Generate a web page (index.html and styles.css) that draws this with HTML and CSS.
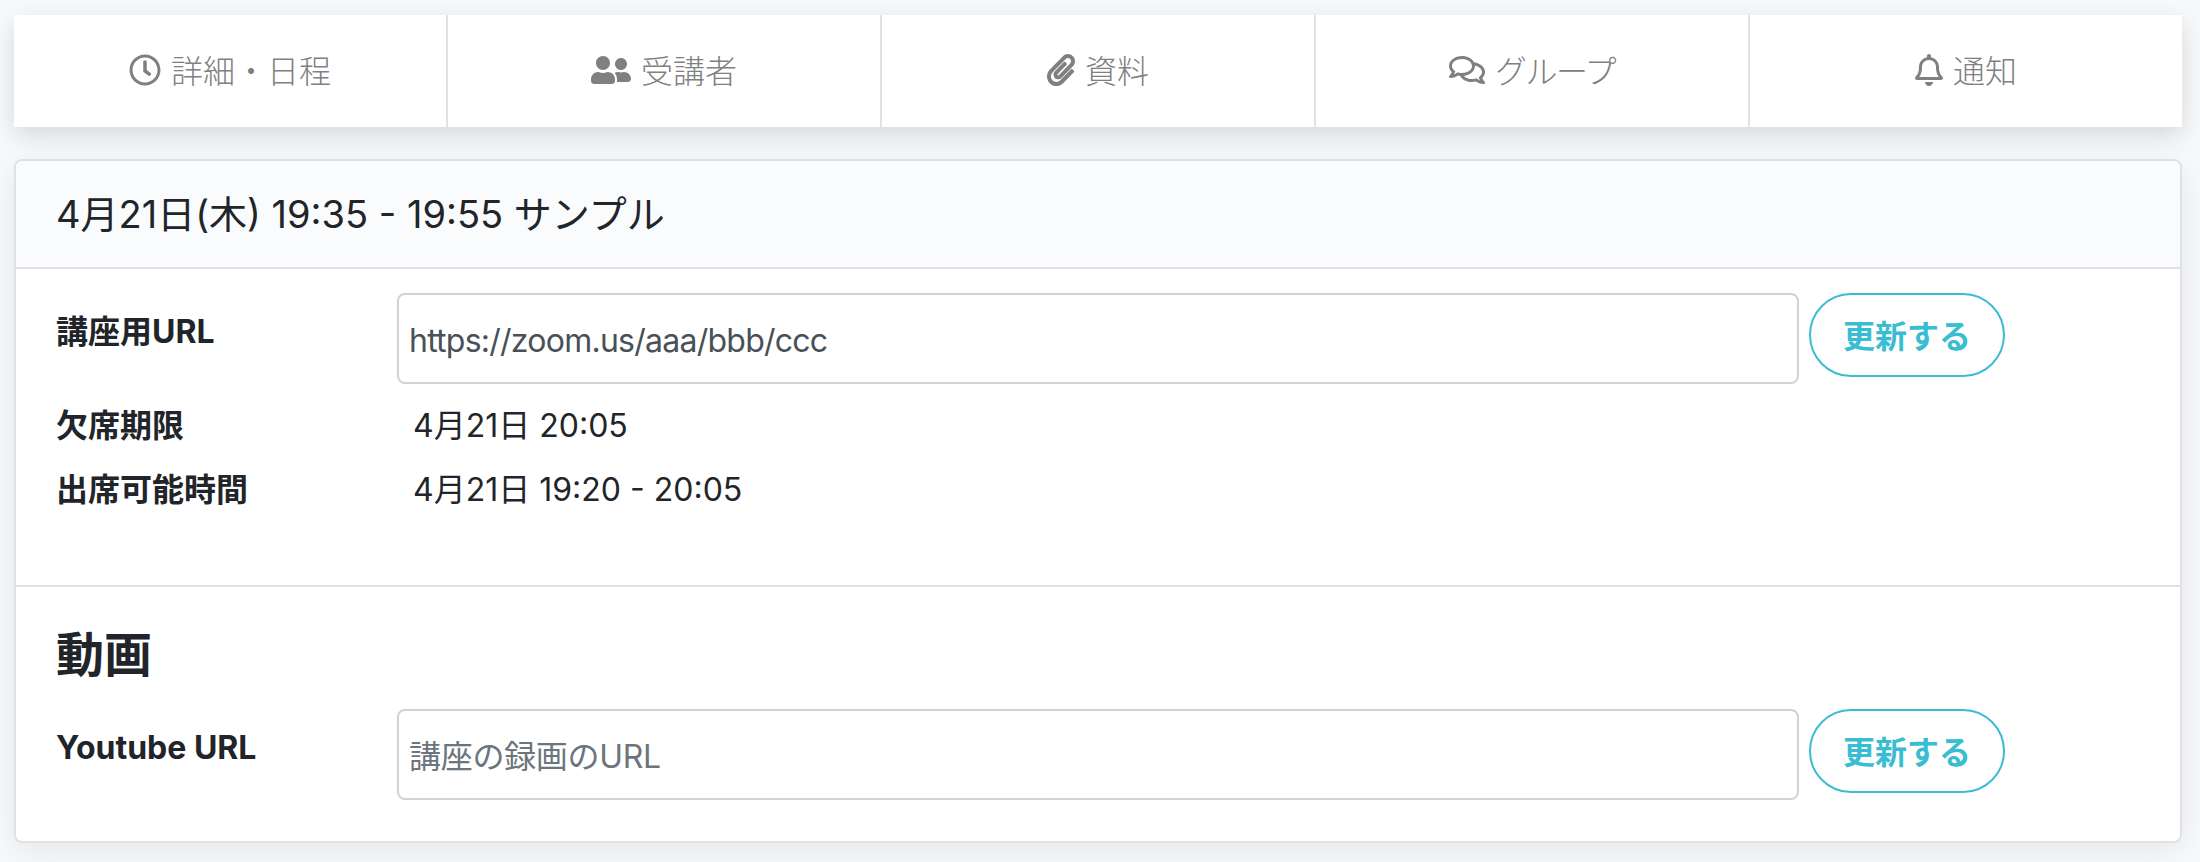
FILE: index.html
```html
<!DOCTYPE html>
<html lang="ja">
<head>
<meta charset="utf-8">
<title>講座詳細</title>
<link rel="stylesheet" href="styles.css">
</head>
<body>
<nav class="tabs">
  <a class="tab"><svg class="ico ico-clock" viewBox="0 0 512 512"><path d="M256 8C119 8 8 119 8 256s111 248 248 248 248-111 248-248S393 8 256 8zm0 448c-110.500 0-200-89.500-200-200S145.500 56 256 56s200 89.500 200 200-89.500 200-200 200zm61.800-104.400l-84.900-61.700c-3.100-2.300-4.900-5.900-4.900-9.700V116c0-6.600 5.400-12 12-12h32c6.600 0 12 5.400 12 12v141.700l66.800 48.600c5.400 3.900 6.500 11.400 2.600 16.800L334.600 349c-3.900 5.300-11.400 6.500-16.800 2.600z"/></svg><span>詳細・日程</span></a>
  <a class="tab"><svg class="ico ico-users" viewBox="0 0 640 512"><path d="M192 256c61.900 0 112-50.100 112-112S253.900 32 192 32 80 82.100 80 144s50.100 112 112 112zm76.800 32h-8.300c-20.800 10-43.900 16-68.500 16s-47.600-6-68.500-16h-8.300C51.600 288 0 339.600 0 403.200V432c0 26.500 21.500 48 48 48h288c26.500 0 48-21.500 48-48v-28.800c0-63.600-51.600-115.200-115.200-115.200zM480 256c53 0 96-43 96-96s-43-96-96-96-96 43-96 96 43 96 96 96zm48 32h-3.800c-13.900 4.800-28.600 8-44.200 8s-30.300-3.200-44.200-8H432c-20.400 0-39.200 5.900-55.700 15.400 24.400 26.300 39.700 61.200 39.700 99.800v38.400c0 2.200-.5 4.300-.6 6.400H592c26.500 0 48-21.500 48-48 0-61.900-50.100-112-112-112z"/></svg><span>受講者</span></a>
  <a class="tab"><svg class="ico ico-clip" viewBox="0 0 448 512"><path d="M43.246 466.142c-58.430-60.289-57.341-157.511 1.386-217.581L254.392 34c44.316-45.332 116.351-45.336 160.671 0 43.890 44.894 43.943 117.329 0 162.276L232.214 383.128c-29.855 30.537-78.633 30.111-107.982-.998-28.275-29.970-27.368-77.473 1.452-106.953l143.743-146.835c6.182-6.314 16.312-6.422 22.626-.241l22.861 22.379c6.315 6.182 6.422 16.312.241 22.626L171.427 319.927c-4.932 5.045-5.236 13.428-.648 18.292 4.372 4.634 11.245 4.711 15.688.165l182.849-186.851c19.613-20.062 19.613-52.725-.011-72.798-19.189-19.627-49.957-19.637-69.154 0L90.390 293.295c-34.763 35.560-35.299 93.120-1.191 128.313 34.010 35.093 88.985 35.137 123.058.286l172.060-175.999c6.177-6.319 16.307-6.433 22.626-.256l22.877 22.364c6.319 6.177 6.434 16.307.256 22.626l-172.060 175.998c-59.576 60.938-155.943 60.216-214.770-.485z"/></svg><span>資料</span></a>
  <a class="tab"><svg class="ico ico-comments" viewBox="0 0 576 512"><path d="M532 386.200c27.500-27.100 44-61.100 44-98.200 0-80-76.500-146.100-176.200-157.900C368.300 72.500 294.300 32 208 32 93.100 32 0 103.600 0 192c0 37 16.500 71 44 98.200-15.300 30.700-37.300 54.500-37.700 54.900-6.300 6.700-8.100 16.500-4.400 25 3.600 8.500 12 14 21.200 14 53.500 0 96.700-20.200 125.200-38.800 9.200 2.100 18.700 3.700 28.400 4.900C208.100 407.600 281.800 448 368 448c20.800 0 40.800-2.400 59.800-6.800C456.300 459.700 499.400 480 553 480c9.200 0 17.500-5.500 21.200-14 3.600-8.500 1.900-18.300-4.400-25-.4-.3-22.500-24.100-37.800-54.800zm-392.800-92.300L122.100 305c-14.100 9.100-28.500 16.300-43.100 21.400 2.700-4.700 5.400-9.700 8-14.800l15.500-31.100L77.700 256C64.200 242.600 48 220.700 48 192c0-60.700 73.300-112 160-112s160 51.300 160 112-73.300 112-160 112c-16.500 0-33-1.900-49-5.600l-19.800-4.500zM498.300 352l-24.700 24.400 15.500 31.100c2.600 5.100 5.300 10.100 8 14.800-14.600-5.100-29-12.300-43.100-21.400l-17.100-11.100-19.900 4.600c-16 3.700-32.500 5.600-49 5.600-54 0-102.200-20.100-131.300-49.700C338 339.500 416 272.900 416 192c0-3.400-.4-6.700-.7-10C479.700 196.500 528 238.800 528 288c0 28.700-16.200 50.600-29.700 64z"/></svg><span class="tight">グループ</span></a>
  <a class="tab"><svg class="ico ico-clip" viewBox="0 0 448 512"><path d="M439.390 362.290c-19.320-20.760-55.470-51.990-55.470-154.290 0-77.700-54.480-139.900-127.940-155.160V32c0-17.670-14.320-32-31.980-32s-31.980 14.330-31.980 32v20.840C118.560 68.100 64.080 130.300 64.080 208c0 102.300-36.150 133.530-55.470 154.290-6 6.450-8.660 14.160-8.610 21.710.11 16.400 12.980 32 32.100 32h383.800c19.120 0 32-15.600 32.100-32 .05-7.550-2.610-15.270-8.610-21.710zM67.530 368c21.220-27.970 44.420-74.330 44.530-159.420 0-.2-.06-.38-.06-.58 0-61.860 50.140-112 112-112s112 50.140 112 112c0 .2-.06.38-.06.58.11 85.100 23.310 131.460 44.530 159.420H67.530zM224 512c35.320 0 63.970-28.650 63.970-64H160.030c0 35.350 28.650 64 63.970 64z"/></svg><span>通知</span></a>
</nav>
<main class="card">
  <header class="card-head">4月21日(木) 19:35 - 19:55 サンプル</header>
  <section class="sec sec-info">
    <div class="row row-url">
      <div class="label">講座用URL</div>
      <div class="control"><input class="field" type="text" value="https://zoom.us/aaa/bbb/ccc"></div>
      <button class="btn" type="button">更新する</button>
    </div>
    <div class="row row-text row-a"><div class="label">欠席期限</div><div class="value">4月21日 20:05</div></div>
    <div class="row row-text row-b"><div class="label">出席可能時間</div><div class="value">4月21日 19:20 - 20:05</div></div>
  </section>
  <section class="sec sec-video">
    <h2 class="title">動画</h2>
    <div class="row row-url">
      <div class="label label-yt">Youtube URL</div>
      <div class="control"><input class="field" type="text" placeholder="講座の録画のURL"></div>
      <button class="btn" type="button">更新する</button>
    </div>
  </section>
</main>
</body>
</html>
```
FILE: styles.css
```css
* { box-sizing: border-box; }
html, body { height: 100%; }
body {
  margin: 0;
  padding: 15px 18px 0 14px;
  overflow: hidden;
  background: #f8f9fa;
  color: #212529;
  font-family: "Inter", "Noto Sans CJK JP", sans-serif;
  font-size: 32px;
  line-height: 48px;
}
.tabs {
  display: flex;
  height: 112px;
  background: #fff;
  box-shadow: 0 8px 24px rgba(0,0,0,.14);
}
.tab {
  flex: 1 1 0;
  display: flex;
  align-items: center;
  justify-content: center;
  gap: 10px;
  padding-bottom: 2px;
  color: #808080;
  font-family: "Noto Sans CJK JP", sans-serif;
  font-size: 32px;
  font-weight: 300;
  border-left: 2px solid #dee2e6;
}
.tab:first-child { border-left: 0; }
.tab span { margin-top: -3px; }
.tight { letter-spacing: -1.5px; }
.ico { height: 32px; fill: #808080; flex: none; }
.ico-clock { width: 32px; }
.ico-users { width: 40px; }
.ico-clip { width: 28px; }
.ico-comments { width: 36px; }
.card {
  margin-top: 32px;
  height: 684px;
  background: #fff;
  border: 2px solid #dfe1e4;
  border-radius: 8px;
  box-shadow: 0 8px 32px rgba(0,0,0,.08);
  overflow: hidden;
}
.card-head {
  height: 108px;
  padding: 0 40px;
  display: flex;
  align-items: center;
  font-size: 38px;
  background: #fafbfd;
  border-bottom: 2px solid #dfe1e4;
}
.sec { padding: 0 40px; }
.sec-info { height: 318px; padding-top: 24px; border-bottom: 2px solid #dfe1e4; }
.sec-video { padding-top: 33px; }
.title { margin: 0 0 27px; font-size: 48px; line-height: 62px; font-weight: 700; font-family: "Noto Sans CJK JP", sans-serif; }
.row { display: flex; }
.row-url { align-items: flex-start; }
.label { width: 341px; flex: none; font-weight: 700; padding-top: 15px; }
.label-yt { padding-top: 15px; }
.control { width: 1402px; flex: none; }
.field {
  display: block;
  width: 100%;
  height: 91px;
  padding: 4px 10px 0;
  border: 2px solid #ced4da;
  border-radius: 8px;
  background: #fff;
  color: #495057;
  font: inherit;
  letter-spacing: -.75px;
  outline: none;
}
.field::placeholder { color: #6c757d; opacity: 1; font-weight: 400; letter-spacing: -.3px; }
.btn {
  margin-left: 10px;
  width: 196px;
  height: 84px;
  flex: none;
  border: 2px solid #38bdd2;
  border-radius: 42px;
  background: #fff;
  color: #38bdd2;
  font-family: "Noto Sans CJK JP", sans-serif;
  font-size: 32px;
  font-weight: 700;
  padding: 0 0 2px;
}
.row-text .label { padding-top: 0; }
.value { padding-left: 16px; }
.row-a { margin-top: 18px; }
.row-b { margin-top: 16px; }
```
